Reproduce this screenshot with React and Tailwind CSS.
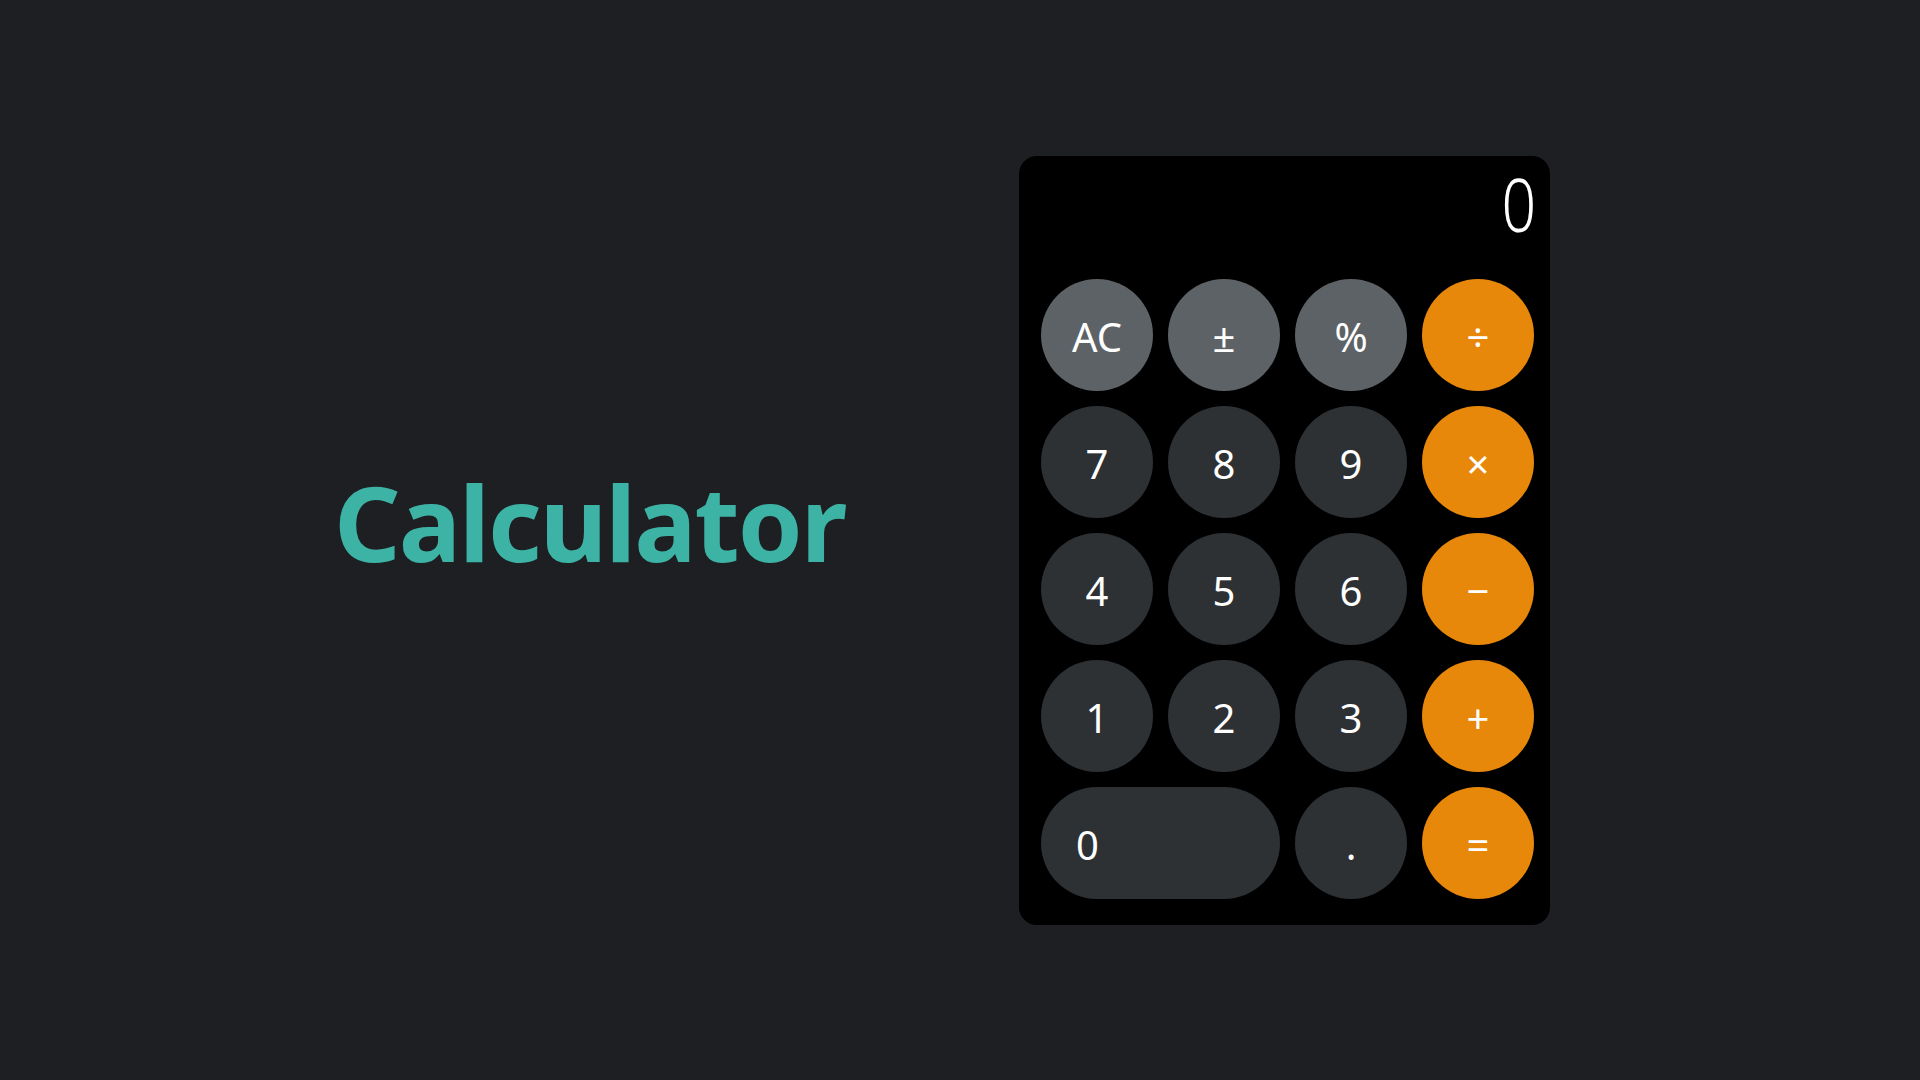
import React from 'react'

const keys = [
  { label: 'AC', kind: 'fn' },
  { label: '±', kind: 'fn' },
  { label: '%', kind: 'fn' },
  { label: '÷', kind: 'op' },
  { label: '7', kind: 'num' },
  { label: '8', kind: 'num' },
  { label: '9', kind: 'num' },
  { label: '×', kind: 'op' },
  { label: '4', kind: 'num' },
  { label: '5', kind: 'num' },
  { label: '6', kind: 'num' },
  { label: '−', kind: 'op' },
  { label: '1', kind: 'num' },
  { label: '2', kind: 'num' },
  { label: '3', kind: 'num' },
  { label: '+', kind: 'op' },
  { label: '0', kind: 'num', wide: true },
  { label: '.', kind: 'num' },
  { label: '=', kind: 'op' },
]

const kindClass = {
  fn: 'bg-[#5d6266]',
  num: 'bg-[#2e3134]',
  op: 'bg-[#e7880b]',
}

const Key = ({ item }) => {
  if (item.wide) {
    return (
      <button
        className={`col-span-2 h-[112px] rounded-full flex items-center justify-start pl-[35px] pt-[5px] text-white text-[40px] ${kindClass[item.kind]}`}
      >
        {item.label}
      </button>
    )
  }
  return (
    <button
      className={`w-[112px] h-[112px] rounded-full flex items-center justify-center pt-[5px] text-white text-[40px] ${kindClass[item.kind]}`}
    >
      {item.label}
    </button>
  )
}

const Calculator = () => {
  return (
    <div className="w-[531px] h-[769px] bg-black rounded-[18px] pt-[11px] pl-[22px] pr-[16px]">
      <div className="flex justify-end mb-[38px] -mr-[2px]">
        <span className="text-white text-[74px] font-light leading-none scale-x-[0.82] origin-right">0</span>
      </div>
      <div className="grid grid-cols-[repeat(4,112px)] gap-[15px]">
        {keys.map((k) => (
          <Key item={k} key={k.label} />
        ))}
      </div>
    </div>
  )
}

export default function App() {
  return (
    <div
      className="w-full h-screen bg-[#1e1f22] flex items-center justify-center gap-[169px] pr-[36px]"
      style={{ fontFamily: '"Noto Sans", "Open Sans", sans-serif' }}
    >
      <h1 className="w-[516px] text-[104px] font-bold leading-none tracking-[-2px] text-[#3db3a6] mb-[36px]">
        Calculator
      </h1>
      <Calculator />
    </div>
  )
}
